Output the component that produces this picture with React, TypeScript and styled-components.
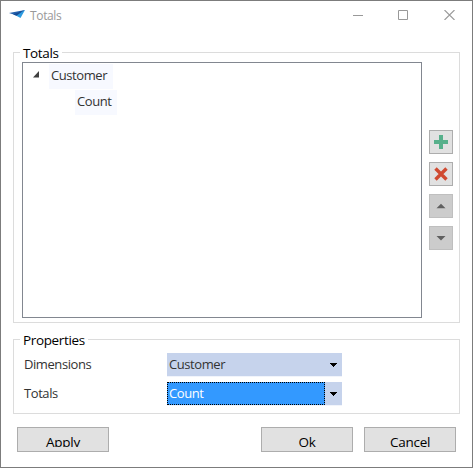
import React from "react";
import styled, { createGlobalStyle } from "styled-components";

const GlobalStyle = createGlobalStyle`
  * { box-sizing: border-box; }
  body { margin: 0; background: #fff; }
`;

const Window = styled.div`
  width: 473px;
  height: 468px;
  border: 1px solid #7c7c7c;
  background: #fff;
  color: #333;
  font-family: "Open Sans", "Noto Sans", sans-serif;
  font-size: 13px;
  letter-spacing: -0.42px;
  line-height: 18px;
  display: flex;
  flex-direction: column;
  overflow: hidden;
`;

const TitleBar = styled.header`
  height: 28px;
  flex: none;
  display: flex;
  align-items: center;
  padding-left: 8px;
  color: #999;
`;

const Title = styled.div`
  flex: 1;
  padding: 1px 0 0 5px;
  font-size: 12px;
  letter-spacing: -0.35px;
`;

const CaptionButtons = styled.div`
  display: flex;
  gap: 35px;
  padding-right: 17px;
`;

const CloseIcon = styled.svg`
  margin-left: 1px;
`;

const Group = styled.fieldset<{ $h: number; $mt: number }>`
  margin: ${(p) => p.$mt}px 12px 0;
  padding: 0;
  min-width: 0;
  height: ${(p) => p.$h}px;
  flex: none;
  border: 1px solid #dcdcdc;
`;

const Legend = styled.legend`
  margin-left: 6px;
  padding: 1px 3px 0;
  height: 18px;
  color: #000;
  font-size: 13.5px;
  letter-spacing: -0.35px;
  line-height: 18px;
`;

const GroupRow = styled.div`
  display: flex;
  margin-top: 1px;
  padding-left: 8px;
`;

const Tree = styled.div`
  width: 400px;
  height: 256px;
  border: 1px solid #828790;
  padding-top: 1px;
`;

const Node = styled.div<{ $indent: number }>`
  display: flex;
  height: 25px;
  margin-bottom: 1px;
  padding-left: ${(p) => p.$indent}px;
`;

const Expander = styled.svg`
  margin: 7px 10px 0 0;
`;

const NodeLabel = styled.span<{ $w: number }>`
  width: ${(p) => p.$w}px;
  height: 25px;
  padding-left: 2px;
  line-height: 22px;
  background: #f7f9ff;
`;

const Tools = styled.div`
  display: flex;
  flex-direction: column;
  gap: 8px;
  padding: 68px 0 0 7px;
`;

const ToolButton = styled.button`
  width: 24px;
  height: 24px;
  padding: 0;
  border: 1px solid #adadad;
  background: #e1e1e1;
  display: flex;
  &:disabled { background: #ccc; border-color: #bfbfbf; }
`;

const Fields = styled.div`
  display: flex;
  flex-direction: column;
  gap: 5px;
  padding: 5px 0 0 10px;
`;

const Field = styled.div`
  display: flex;
  height: 24px;
`;

const FieldLabel = styled.label`
  width: 143px;
  line-height: 23px;
`;

const Combo = styled.div`
  width: 175px;
  display: flex;
  background: #c6d3ec;
  border-bottom: 1px solid #f1f4fb;
`;

const ComboValue = styled.div<{ $focused?: boolean }>`
  width: 158px;
  height: 23px;
  line-height: ${(p) => (p.$focused ? 21 : 23)}px;
  padding-left: ${(p) => (p.$focused ? 1 : 2)}px;
  ${(p) => p.$focused && "background:#3399ff; color:#fff; border:1px dotted #000;"}
`;

const Footer = styled.footer`
  display: flex;
  justify-content: space-between;
  padding: 13px 16px 0;
`;

const Choices = styled.div`
  display: flex;
  gap: 11px;
`;

const PushButton = styled.button`
  width: 92px;
  height: 25px;
  padding: 4px 0;
  border: 1px solid #adadad;
  background: #e1e1e1;
  color: #000;
  font-family: inherit;
  font-size: 13.5px;
  letter-spacing: -0.25px;
  line-height: 21px;
`;

const ButtonText = styled.span`
  display: block;
  height: 15px;
  overflow: hidden;
`;

const ComboArrow = () => (
  <svg width="17" height="23" shapeRendering="crispEdges">
    <path d="M5 10h7v1h-1v1h-1v1h-1v1h-1v-1h-1v-1h-1v-1h-1z" fill="#000" />
  </svg>
);

export default function App() {
  return (
    <>
      <GlobalStyle />
      <Window>
        <TitleBar>
          <svg width="16" height="16">
            <path d="M0 6L16 3L12 6L5.5 7.8z" fill="#2360ac" />
            <path d="M5.5 7.8L16 3L11.5 11z" fill="#2c9be0" />
            <path d="M4 7.4L15 3.3L7.5 8.8z" fill="#174a93" />
          </svg>
          <Title>Totals</Title>
          <CaptionButtons>
            <svg width="10" height="10" shapeRendering="crispEdges">
              <path d="M0 5h10v1H0z" fill="#999" />
            </svg>
            <svg width="10" height="10">
              <path d="M.5 .5h9v9h-9z" fill="none" stroke="#999" />
            </svg>
            <CloseIcon width="11" height="10">
              <path d="M.5 0l10 10M10.5 0l-10 10" stroke="#999" strokeWidth="1.1" />
            </CloseIcon>
          </CaptionButtons>
        </TitleBar>

        <Group $mt={14} $h={280}>
          <Legend>Totals</Legend>
          <GroupRow>
            <Tree>
              <Node $indent={10}>
                <Expander width="6" height="7">
                  <path d="M6 0v6.5H0z" fill="#404040" />
                </Expander>
                <NodeLabel $w={64}>Customer</NodeLabel>
              </Node>
              <Node $indent={52}>
                <NodeLabel $w={42}>Count</NodeLabel>
              </Node>
            </Tree>
            <Tools>
              <ToolButton aria-label="Add">
                <svg width="22" height="22" shapeRendering="crispEdges">
                  <path d="M9 4h4v5h5v4h-5v5H9v-5H4V9h5z" fill="#57b08b" />
                </svg>
              </ToolButton>
              <ToolButton aria-label="Remove">
                <svg width="22" height="22">
                  <path d="M5.5 5.5l11 11M16.5 5.5l-11 11" stroke="#d04a31" strokeWidth="3.4" />
                </svg>
              </ToolButton>
              <ToolButton disabled aria-label="Move up">
                <svg width="22" height="22">
                  <path d="M6.5 13.2L11 8.7L15.5 13.2z" fill="#606060" />
                </svg>
              </ToolButton>
              <ToolButton disabled aria-label="Move down">
                <svg width="22" height="22">
                  <path d="M6.5 9h9L11 13.5z" fill="#606060" />
                </svg>
              </ToolButton>
            </Tools>
          </GroupRow>
        </Group>

        <Group $mt={7} $h={84}>
          <Legend>Properties</Legend>
          <Fields>
            <Field>
              <FieldLabel>Dimensions</FieldLabel>
              <Combo>
                <ComboValue>Customer</ComboValue>
                <ComboArrow />
              </Combo>
            </Field>
            <Field>
              <FieldLabel>Totals</FieldLabel>
              <Combo>
                <ComboValue $focused>Count</ComboValue>
                <ComboArrow />
              </Combo>
            </Field>
          </Fields>
        </Group>

        <Footer>
          <PushButton><ButtonText>Apply</ButtonText></PushButton>
          <Choices>
            <PushButton><ButtonText>Ok</ButtonText></PushButton>
            <PushButton><ButtonText>Cancel</ButtonText></PushButton>
          </Choices>
        </Footer>
      </Window>
    </>
  );
}
